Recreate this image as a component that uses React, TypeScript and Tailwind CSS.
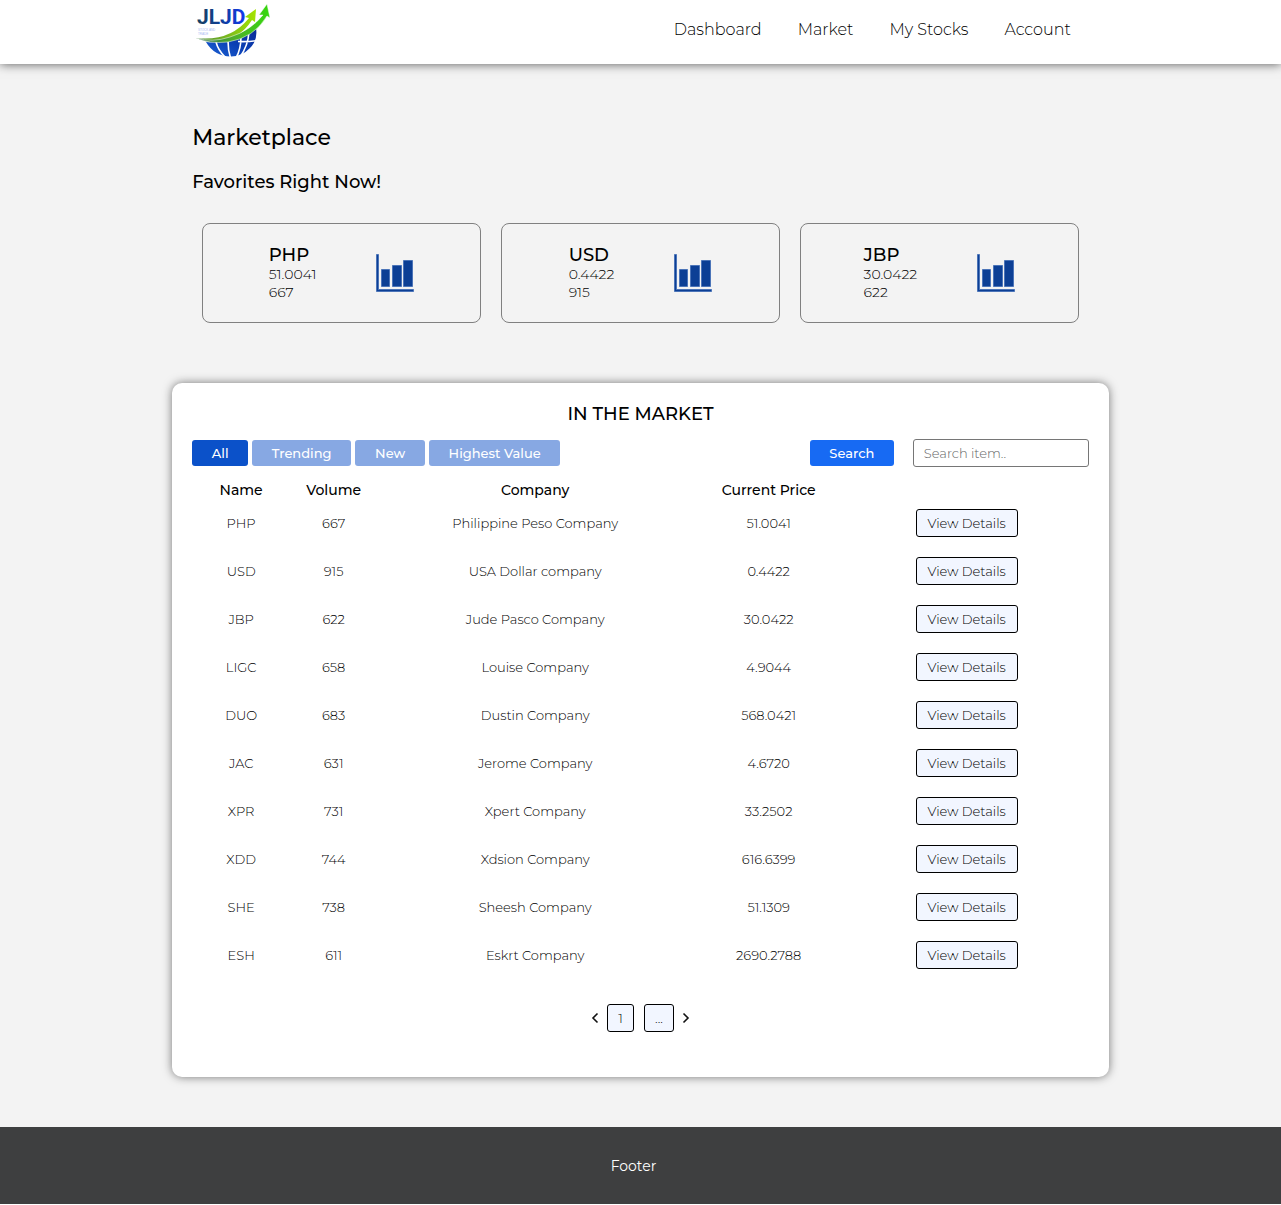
import { useState } from "react";

const navItems = ["Dashboard", "Market", "My Stocks", "Account"];

const favorites = [
  { name: "PHP", price: "51.0041", volume: "667" },
  { name: "USD", price: "0.4422", volume: "915" },
  { name: "JBP", price: "30.0422", volume: "622" },
];

const filters = [
  { label: "All", width: "w-14" },
  { label: "Trending", width: "w-[99px]" },
  { label: "New", width: "w-[70px]" },
  { label: "Highest Value", width: "w-[131px]" },
];

const stocks = [
  ["PHP", "667", "Philippine Peso Company", "51.0041"],
  ["USD", "915", "USA Dollar company", "0.4422"],
  ["JBP", "622", "Jude Pasco Company", "30.0422"],
  ["LIGC", "658", "Louise Company", "4.9044"],
  ["DUO", "683", "Dustin Company", "568.0421"],
  ["JAC", "631", "Jerome Company", "4.6720"],
  ["XPR", "731", "Xpert Company", "33.2502"],
  ["XDD", "744", "Xdsion Company", "616.6399"],
  ["SHE", "738", "Sheesh Company", "51.1309"],
  ["ESH", "611", "Eskrt Company", "2690.2788"],
];

function Logo() {
  return (
    <svg viewBox="0 0 80 60" className="h-[60px] w-20" role="img" aria-label="JLJD">
      <defs>
        <linearGradient id="word" x1="0" x2="1">
          <stop offset="0" stopColor="#173f60" />
          <stop offset="0.5" stopColor="#0f3f98" />
          <stop offset="1" stopColor="#1238f0" />
        </linearGradient>
        <linearGradient id="globe" x1="0" x2="1" y1="1" y2="0">
          <stop offset="0" stopColor="#1c62d4" />
          <stop offset="0.5" stopColor="#0b3fb4" />
          <stop offset="1" stopColor="#0a2c96" />
        </linearGradient>
        <linearGradient id="leaf" x1="0" x2="1">
          <stop offset="0" stopColor="#2a6a4a" />
          <stop offset="0.5" stopColor="#4fae2c" />
          <stop offset="1" stopColor="#35d80c" />
        </linearGradient>
        <linearGradient id="lime" x1="0" x2="1">
          <stop offset="0" stopColor="#4c8a3c" />
          <stop offset="1" stopColor="#a4e400" />
        </linearGradient>
      </defs>
      <path d="M14 42 Q44 44 64 28 Q66 40 58 48 Q50 56.5 39 56.5 Q22 56 14 42Z" fill="url(#globe)" />
      <path
        d="M24 42 Q26 50 33 57 M36 41 Q36 50 38.5 58 M49 37 Q49 49 44 58 M57 32 Q56 46 48 57 M46 41.5 Q58 42 68 40"
        fill="none"
        stroke="#fff"
        strokeWidth="1.6"
      />
      <text x="6" y="31" fontFamily="Liberation Sans, sans-serif" fontSize="3" fill="#a9b9f2">
        STOCK AND
      </text>
      <text x="6" y="35" fontFamily="Liberation Sans, sans-serif" fontSize="3" fill="#a9b9f2">
        TRADE
      </text>
      <path d="M4 38 Q38 42 57 18 L53 17 L64 9 L63 22 L60 20 Q46 42 22 41 Q10 41 4 38Z" fill="url(#lime)" />
      <text x="5" y="24" fontFamily="Roboto, sans-serif" fontWeight="700" fontSize="21" fill="url(#word)">
        JLJD
      </text>
      <path
        d="M5 38 Q20 43 38 37 Q58 31 71 15 L67 15 L75 4 L78 18 L75 16 Q62 38 36 42 Q16 44 5 38Z"
        fill="url(#leaf)"
        stroke="#fff"
        strokeWidth="0.5"
      />
    </svg>
  );
}

function ChartIcon() {
  return (
    <svg viewBox="0 0 38 38" className="size-[38px]" aria-hidden="true">
      <g fill="#0c3f95" stroke="#4b74b8" strokeWidth="1">
        <path d="M0.5 0.5h2v35h35v2h-37z" />
        <path d="M5.5 15.5h8v17h-8z" />
        <path d="M16.5 11.5h9v21h-9z" />
        <path d="M27.5 6.5h9v26h-9z" />
      </g>
    </svg>
  );
}

function Chevron({ d }: { d: string }) {
  return (
    <svg viewBox="0 0 8 12" className="h-3 w-2" fill="none" stroke="#111" strokeWidth="1.6" aria-hidden="true">
      <path d={d} />
    </svg>
  );
}

const pageButton =
  "h-7 rounded-[3px] border border-black bg-[#f2f6ff] pt-0.5 text-[13px] font-light text-black";

export default function App() {
  const [active, setActive] = useState("All");
  const [query, setQuery] = useState("");

  return (
    <div className="bg-[#f3f3f3] font-['Montserrat','Inter',sans-serif] text-black">
      <header className="relative flex h-16 items-start justify-between bg-white px-[15%] shadow-[0_0_10px_#555]">
        <a href="#home">
          <Logo />
        </a>
        <nav className="flex gap-9 pt-[18px] pr-[18px]">
          {navItems.map((item) => (
            <a key={item} href="#nav" className="text-base leading-6 font-light">
              {item}
            </a>
          ))}
        </nav>
      </header>

      <main className="px-[15%] pt-[59px] pb-[50px]">
        <h1 className="text-[22px] leading-[30px] font-medium">Marketplace</h1>
        <h2 className="mt-[17px] text-lg leading-6 font-medium">Favorites Right Now!</h2>

        <section className="mx-2.5 mt-[29px] grid grid-cols-3 gap-5">
          {favorites.map((f) => (
            <article
              key={f.name}
              className="flex h-[100px] items-center justify-center gap-[60px] rounded-lg border border-[#808080]"
            >
              <div className="text-sm leading-[18px] font-light">
                <h3 className="text-lg leading-5 font-medium">{f.name}</h3>
                <p>{f.price}</p>
                <p>{f.volume}</p>
              </div>
              <ChartIcon />
            </article>
          ))}
        </section>

        <section className="-mx-5 mt-[60px] rounded-[10px] bg-white p-5 pb-[45px] shadow-[0_0_10px_#777]">
          <h2 className="text-center text-lg leading-[22px] font-medium">IN THE MARKET</h2>

          <div className="mt-3.5 flex items-center justify-between">
            <div className="flex gap-1">
              {filters.map((f) => (
                <button
                  key={f.label}
                  type="button"
                  onClick={() => setActive(f.label)}
                  className={`${f.width} h-[26px] rounded-[3px] pt-0.5 text-[13px] font-medium text-white ${
                    active === f.label ? "bg-[#0b51c9]" : "bg-[#87a8e3]"
                  }`}
                >
                  {f.label}
                </button>
              ))}
            </div>
            <form className="flex items-center gap-[19px]" onSubmit={(e) => e.preventDefault()}>
              <button
                type="submit"
                className="h-[26px] w-[84px] rounded-[3px] bg-[#176af3] pt-0.5 text-[13px] font-medium text-white"
              >
                Search
              </button>
              <input
                type="text"
                aria-label="Search item"
                placeholder="Search item.."
                value={query}
                onChange={(e) => setQuery(e.target.value)}
                className="h-7 w-44 rounded-[3px] border border-[#767676] bg-white px-2.5 text-[13px] font-light placeholder:text-[#666]"
              />
            </form>
          </div>

          <table className="mt-3 w-full table-fixed text-center text-[13px] font-light text-black">
            <colgroup>
              <col className="w-[98px]" />
              <col className="w-[87px]" />
              <col className="w-[316px]" />
              <col className="w-[151px]" />
              <col className="w-[245px]" />
            </colgroup>
            <thead>
              <tr className="h-5 text-sm leading-[18px]">
                <th className="pt-0.5 font-medium">Name</th>
                <th className="pt-0.5 font-medium">Volume</th>
                <th className="pt-0.5 font-medium">Company</th>
                <th className="pt-0.5 font-medium">Current Price</th>
                <td />
              </tr>
            </thead>
            <tbody>
              {stocks.map((row) => (
                <tr key={row[0]} className="h-12">
                  {row.map((cell) => (
                    <td key={cell} className="pt-0.5">
                      {cell}
                    </td>
                  ))}
                  <td>
                    <button type="button" className={`${pageButton} w-[102px]`}>
                      View Details
                    </button>
                  </td>
                </tr>
              ))}
            </tbody>
          </table>

          <div className="mt-[25px] flex items-center justify-center">
            <button type="button" aria-label="Previous page" className="mr-2">
              <Chevron d="M6.5 1.5 2 6l4.5 4.5" />
            </button>
            <button type="button" className={`${pageButton} mr-2.5 w-[27px]`}>
              1
            </button>
            <button type="button" className={`${pageButton} mr-2 w-[30px]`}>
              ...
            </button>
            <button type="button" aria-label="Next page">
              <Chevron d="M1.5 1.5 6 6l-4.5 4.5" />
            </button>
          </div>
        </section>
      </main>

      <footer className="flex h-[77px] items-center justify-center bg-[#3e3f40] pr-3.5 text-sm text-white">
        Footer
      </footer>
    </div>
  );
}
